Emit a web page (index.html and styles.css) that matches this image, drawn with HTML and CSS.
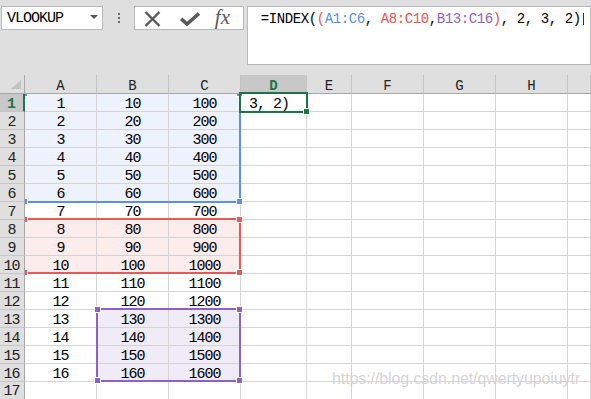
FILE: index.html
```html
<!DOCTYPE html>
<html lang="en">
<head>
    <meta charset="UTF-8">
    <title>INDEX</title>
    <link rel="stylesheet" href="styles.css">
</head>
<body>
    <div class="app">
        <div class="toolbar">
            <div class="namebox"><span>VLOOKUP</span><span class="caret"></span></div>
            <div class="grip"><i></i><i></i><i></i></div>
            <div class="fxbox">
                <svg class="icon-x" width="17" height="16" viewBox="0 0 17 16"><path d="M1.5 1 L15.5 15 M15.5 1 L1.5 15" stroke="#5a5a5a" stroke-width="2.4" fill="none"/></svg>
                <svg class="icon-ok" width="20" height="14" viewBox="0 0 20 14"><path d="M1.2 6.8 L7 12 L19 1.5" stroke="#5a5a5a" stroke-width="3.6" fill="none"/></svg>
                <span class="fx">fx</span>
            </div>
            <div class="formula">=INDEX(<span class="r">(</span><span class="b">A1:C6</span>, <span class="r">A8:C10</span>,<span class="p">B13:C16</span><span class="r">)</span>, 2, 3, 2)<span class="cursor"></span></div>
        </div>
        <div class="sheet" id="sheet">
            <div class="range blue"><i class="h tl"></i><i class="h tr"></i><i class="h bl"></i><i class="h br"></i></div>
            <div class="range red"><i class="h tl"></i><i class="h tr"></i><i class="h bl"></i><i class="h br"></i></div>
            <div class="range purple"><i class="h tl"></i><i class="h tr"></i><i class="h bl"></i><i class="h br"></i></div>
            <div class="range active"><i class="h br"></i></div>
            <div class="watermark">https://blog.csdn.net/qwertyupoiuytr</div>
        </div>
    </div>

    <script>
        const sheet = document.getElementById('sheet');
        const letters = ['A', 'B', 'C', 'D', 'E', 'F', 'G', 'H', ''];
        let html = '<div class="ch corner"><span class="tri"></span></div>';

        letters.forEach(l => {
            html += `<div class="ch${l === 'D' ? ' sel' : ''}">${l}</div>`;
        });

        for (let r = 1; r <= 17; r++) {
            const last = r === 17 ? ' last' : '';
            html += `<div class="rh${r === 1 ? ' sel' : ''}${last}">${r}</div>`;
            let fill = '';
            if (r <= 6) fill = 'fb';
            else if (r >= 8 && r <= 10) fill = 'fr';
            const vals = r <= 16 ? [r, r * 10, r * 100] : ['', '', ''];
            vals.forEach((v, i) => {
                let f = fill;
                if (r >= 13 && r <= 16 && i > 0) f = 'fp';
                html += `<div class="cell ${f}${last}">${v}</div>`;
            });
            html += r === 1 ? '<div class="cell edit">3, 2)</div>' : `<div class="cell${last}"></div>`;
            for (let c = 0; c < 5; c++) html += `<div class="cell${last}"></div>`;
        }

        sheet.insertAdjacentHTML('afterbegin', html);
    </script>
</body>
</html>
```

FILE: styles.css
```css
body {
    margin: 0;
    background: #dfdfdf;
    font-family: "Liberation Mono", monospace;
    color: #000;
    overflow: hidden;
}

.app {
    width: 591px;
    height: 399px;
    overflow: hidden;
}

.toolbar {
    height: 75px;
    box-sizing: border-box;
    padding: 6px 0 0 1px;
    display: flex;
    align-items: flex-start;
}

.namebox {
    width: 102px;
    height: 24px;
    box-sizing: border-box;
    border: 1px solid #b9b9b9;
    background: #fff;
    display: flex;
    align-items: flex-start;
    justify-content: space-between;
    padding: 4px 4px 0 5px;
    font-size: 15px;
    letter-spacing: -1px;
    line-height: 16px;
}

.caret {
    margin-top: 4px;
    width: 0;
    height: 0;
    border-left: 4px solid transparent;
    border-right: 4px solid transparent;
    border-top: 4px solid #555;
}

.grip {
    margin: 7px 14px 0 15px;
    width: 2px;
    display: flex;
    flex-direction: column;
    gap: 2px;
}

.grip i {
    width: 2px;
    height: 2px;
    background: #6a6a6a;
}

.fxbox {
    width: 110px;
    height: 24px;
    box-sizing: border-box;
    border: 1px solid #b9b9b9;
    background: #fff;
    display: flex;
    align-items: flex-start;
}

.icon-x {
    margin: 4px 0 0 9px;
}

.icon-ok {
    margin: 5px 0 0 19px;
}

.fx {
    margin: -1px 0 0 15px;
    font-family: "Liberation Serif", serif;
    font-style: italic;
    font-size: 21px;
    line-height: 22px;
    color: #5a5a5a;
}

.formula {
    margin-left: 3px;
    width: 345px;
    height: 59px;
    box-sizing: border-box;
    border: 1px solid #b9b9b9;
    background: #fff;
    padding: 4px 0 0 13px;
    font-size: 14px;
    letter-spacing: -0.4px;
    line-height: 16px;
    white-space: pre;
}

.formula .r { color: #e65454; }
.formula .b { color: #5b8de6; }
.formula .p { color: #8b62c6; }

.cursor {
    display: inline-block;
    width: 1px;
    height: 12px;
    margin-left: 2px;
    background: #333;
    vertical-align: -2px;
}

.sheet {
    position: relative;
    display: grid;
    grid-template-columns: 25px 72px 72px 72px 66px 45px 72px 72px 72px 1fr;
    grid-template-rows: 19px repeat(16, 18px) 17px;
    background: #fff;
}

.cell, .ch, .rh {
    box-sizing: border-box;
    overflow: hidden;
    white-space: nowrap;
    text-align: center;
}

.cell {
    border-right: 1px solid #d4d4d4;
    border-bottom: 1px solid #d4d4d4;
    font-size: 15px;
    letter-spacing: -1px;
    line-height: 17px;
    padding-top: 2px;
}

.cell.fb { background: #edf2fc; }
.cell.fr { background: #fcecec; }
.cell.fp { background: #efecf8; }

.cell.edit {
    text-align: left;
    padding-left: 8px;
    white-space: pre;
}

.ch {
    z-index: 2;
    background: #dfdfdf;
    border-right: 1px solid #c4c4c4;
    border-bottom: 1px solid #a8a8a8;
    font-size: 14px;
    line-height: 17px;
    padding-top: 3px;
    color: #222;
}

.ch.corner {
    display: flex;
    align-items: flex-end;
    justify-content: flex-end;
    padding: 0 3px 4px 0;
    border-right-color: #a8a8a8;
}

.tri {
    width: 0;
    height: 0;
    border-left: 10px solid transparent;
    border-bottom: 9px solid #c2c2c2;
}

.rh {
    z-index: 2;
    background: #dfdfdf;
    border-right: 1px solid #a8a8a8;
    border-bottom: 1px solid #c6c6c6;
    font-size: 15px;
    letter-spacing: -1px;
    line-height: 17px;
    padding: 2px 1px 0 0;
    color: #222;
}

.cell.last, .rh.last {
    border-bottom: none;
    line-height: 14px;
    padding-top: 3px;
}

.ch.sel {
    background: #c8c8c8;
    color: #217346;
    font-weight: bold;
    border-bottom: 2px solid #217346;
}

.rh.sel {
    background: #c8c8c8;
    color: #217346;
    font-weight: bold;
    border-right: 2px solid #217346;
}

.range {
    position: absolute;
    box-sizing: border-box;
    z-index: 1;
}

.range .h {
    position: absolute;
    width: 5px;
    height: 5px;
    border: 1px solid #fff;
}

.h.tl { left: -4px; top: -4px; }
.h.tr { right: -4px; top: -4px; }
.h.bl { left: -4px; bottom: -4px; }
.h.br { right: -4px; bottom: -4px; }

.range.blue {
    left: 25px;
    top: 19px;
    width: 216px;
    height: 109px;
    border-right: 2px solid #5e90e8;
    border-bottom: 2px solid #5e90e8;
}

.range.blue .h { background: #5e90e8; }

.range.red {
    left: 25px;
    top: 143px;
    width: 216px;
    height: 56px;
    border: 2px solid #e65a5a;
    border-left: none;
}

.range.red .h { background: #e65a5a; }

.range.purple {
    left: 96px;
    top: 233px;
    width: 145px;
    height: 74px;
    border: 2px solid #8c62c6;
}

.range.purple .h { background: #8c62c6; }

.range.active {
    z-index: 3;
    left: 239px;
    top: 17px;
    width: 69px;
    height: 21px;
    border: 2px solid #217346;
}

.range.active .h { background: #217346; }

.watermark {
    position: absolute;
    z-index: 4;
    left: 332px;
    top: 296px;
    font-family: "Liberation Sans", Arial, sans-serif;
    font-size: 16px;
    letter-spacing: -0.1px;
    line-height: 16px;
    color: rgba(175, 175, 175, 0.55);
    text-shadow: 0 0 1px rgba(255, 255, 255, 0.9);
}
```
